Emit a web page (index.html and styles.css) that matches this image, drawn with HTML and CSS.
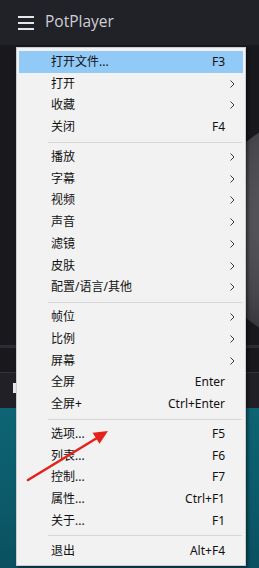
FILE: index.html
```html
<!DOCTYPE html>
<html lang="zh">
<head>
<meta charset="utf-8">
<title>PotPlayer</title>
<link rel="stylesheet" href="styles.css">
</head>
<body>
<div class="app">
  <header class="topbar">
    <svg class="hamburger" width="16" height="14" viewBox="0 0 16 14">
      <rect x="0" y="0" width="16" height="2" fill="#e6e6e8"/>
      <rect x="0" y="6" width="16" height="2" fill="#e6e6e8"/>
      <rect x="0" y="12" width="16" height="2" fill="#e6e6e8"/>
    </svg>
    <span class="title">PotPlayer</span>
  </header>
  <main class="stage">
    <div class="video">
      <div class="disc"></div>
      <div class="seek"></div>
      <div class="controls"><span class="ctl-mark"></span></div>
    </div>
    <div class="desktop"></div>
  </main>

  <div class="menu">
    <div class="item active"><span class="label">打开文件...</span><span class="key">F3</span><span class="sub"></span></div>
    <div class="item"><span class="label">打开</span><span class="key"></span><span class="sub"><svg width="5" height="8" viewBox="0 0 5 8"><polyline points="0.5,0.5 4,4 0.5,7.5" fill="none" stroke="#3a3a3a" stroke-width="1"/></svg></span></div>
    <div class="item"><span class="label">收藏</span><span class="key"></span><span class="sub"><svg width="5" height="8" viewBox="0 0 5 8"><polyline points="0.5,0.5 4,4 0.5,7.5" fill="none" stroke="#3a3a3a" stroke-width="1"/></svg></span></div>
    <div class="item"><span class="label">关闭</span><span class="key">F4</span><span class="sub"></span></div>
    <div class="sep"></div>
    <div class="item"><span class="label">播放</span><span class="key"></span><span class="sub"><svg width="5" height="8" viewBox="0 0 5 8"><polyline points="0.5,0.5 4,4 0.5,7.5" fill="none" stroke="#3a3a3a" stroke-width="1"/></svg></span></div>
    <div class="item"><span class="label">字幕</span><span class="key"></span><span class="sub"><svg width="5" height="8" viewBox="0 0 5 8"><polyline points="0.5,0.5 4,4 0.5,7.5" fill="none" stroke="#3a3a3a" stroke-width="1"/></svg></span></div>
    <div class="item"><span class="label">视频</span><span class="key"></span><span class="sub"><svg width="5" height="8" viewBox="0 0 5 8"><polyline points="0.5,0.5 4,4 0.5,7.5" fill="none" stroke="#3a3a3a" stroke-width="1"/></svg></span></div>
    <div class="item"><span class="label">声音</span><span class="key"></span><span class="sub"><svg width="5" height="8" viewBox="0 0 5 8"><polyline points="0.5,0.5 4,4 0.5,7.5" fill="none" stroke="#3a3a3a" stroke-width="1"/></svg></span></div>
    <div class="item"><span class="label">滤镜</span><span class="key"></span><span class="sub"><svg width="5" height="8" viewBox="0 0 5 8"><polyline points="0.5,0.5 4,4 0.5,7.5" fill="none" stroke="#3a3a3a" stroke-width="1"/></svg></span></div>
    <div class="item"><span class="label">皮肤</span><span class="key"></span><span class="sub"><svg width="5" height="8" viewBox="0 0 5 8"><polyline points="0.5,0.5 4,4 0.5,7.5" fill="none" stroke="#3a3a3a" stroke-width="1"/></svg></span></div>
    <div class="item"><span class="label">配置/语言/其他</span><span class="key"></span><span class="sub"><svg width="5" height="8" viewBox="0 0 5 8"><polyline points="0.5,0.5 4,4 0.5,7.5" fill="none" stroke="#3a3a3a" stroke-width="1"/></svg></span></div>
    <div class="sep"></div>
    <div class="item"><span class="label">帧位</span><span class="key"></span><span class="sub"><svg width="5" height="8" viewBox="0 0 5 8"><polyline points="0.5,0.5 4,4 0.5,7.5" fill="none" stroke="#3a3a3a" stroke-width="1"/></svg></span></div>
    <div class="item"><span class="label">比例</span><span class="key"></span><span class="sub"><svg width="5" height="8" viewBox="0 0 5 8"><polyline points="0.5,0.5 4,4 0.5,7.5" fill="none" stroke="#3a3a3a" stroke-width="1"/></svg></span></div>
    <div class="item"><span class="label">屏幕</span><span class="key"></span><span class="sub"><svg width="5" height="8" viewBox="0 0 5 8"><polyline points="0.5,0.5 4,4 0.5,7.5" fill="none" stroke="#3a3a3a" stroke-width="1"/></svg></span></div>
    <div class="item"><span class="label">全屏</span><span class="key">Enter</span><span class="sub"></span></div>
    <div class="item"><span class="label">全屏+</span><span class="key">Ctrl+Enter</span><span class="sub"></span></div>
    <div class="sep"></div>
    <div class="item"><span class="label">选项...</span><span class="key">F5</span><span class="sub"></span></div>
    <div class="item"><span class="label">列表...</span><span class="key">F6</span><span class="sub"></span></div>
    <div class="item"><span class="label">控制...</span><span class="key">F7</span><span class="sub"></span></div>
    <div class="item"><span class="label">属性...</span><span class="key">Ctrl+F1</span><span class="sub"></span></div>
    <div class="item"><span class="label">关于...</span><span class="key">F1</span><span class="sub"></span></div>
    <div class="sep"></div>
    <div class="item"><span class="label">退出</span><span class="key">Alt+F4</span><span class="sub"></span></div>
  </div>

  <svg class="annot" width="259" height="568" viewBox="0 0 259 568">
    <line x1="28" y1="480" x2="97" y2="438" stroke="#e3231b" stroke-width="2.6" stroke-linecap="round"/>
    <polygon points="108,431 99.5,443.8 92.6,432.8" fill="#e3231b"/>
  </svg>
</div>
</body>
</html>
```

FILE: styles.css
```css
* { box-sizing: border-box; }
html, body { margin: 0; padding: 0; }
body {
  width: 259px;
  height: 568px;
  overflow: hidden;
  background: #17171c;
  font-family: "Noto Sans", "Noto Sans CJK SC", sans-serif;
}
.app {
  position: relative;
  width: 259px;
  height: 568px;
  display: flex;
  flex-direction: column;
}
.topbar {
  height: 45px;
  flex: none;
  background: #212128;
  display: flex;
  align-items: center;
  padding-left: 18px;
  gap: 11px;
}
.hamburger { display: block; margin-top: 0; }
.title {
  color: #cfcfd4;
  font-family: "Open Sans", "Noto Sans", sans-serif;
  font-size: 15.5px;
  letter-spacing: 0;
  line-height: 1;
  margin-top: -1px;
}
.stage {
  flex: 1;
  display: flex;
  flex-direction: column;
}
.video {
  position: relative;
  height: 363px;
  flex: none;
  background: #18181d;
  overflow: hidden;
}
.disc {
  position: absolute;
  left: 205px;
  top: 70px;
  width: 230px;
  height: 230px;
  border-radius: 50%;
  background: radial-gradient(circle at 40% 45%, #5c5c62 0%, #47474d 45%, #2a2a30 75%, #1e1e23 100%);
}
.seek {
  position: absolute;
  left: 0;
  right: 0;
  top: 300px;
  height: 3px;
  background: #2c2c32;
}
.controls {
  position: absolute;
  left: 0;
  right: 0;
  top: 327px;
  height: 36px;
  background: #202026;
  border-top: 1px solid #34343a;
}
.ctl-mark {
  position: absolute;
  left: 13px;
  top: 10px;
  width: 3px;
  height: 10px;
  background: #e8e8e8;
}
.desktop {
  flex: 1;
  background: linear-gradient(180deg, #0e6474 0%, #0b5a6a 60%, #0a5060 100%);
}
.menu {
  position: absolute;
  left: 16px;
  top: 47px;
  width: 230px;
  padding: 3px 2px;
  background: #f2f2f2;
  border: 1px solid #cccccc;
  box-shadow: 2px 2px 3px rgba(0, 0, 0, 0.45);
  color: #111111;
  font-size: 12px;
}
.item {
  height: 21.75px;
  display: grid;
  grid-template-columns: 1fr auto 18px;
  align-items: center;
  padding-left: 32px;
  line-height: 1;
}
.item.active { background: #91c9f7; }
.label { white-space: nowrap; }
.key { white-space: nowrap; text-align: right; }
.sub {
  display: flex;
  align-items: center;
  padding-left: 5px;
}
.sub svg { display: block; }
.sep {
  height: 8px;
  display: flex;
  align-items: center;
  margin-left: 29px;
  margin-right: 1px;
}
.sep::before {
  content: "";
  display: block;
  width: 100%;
  height: 1px;
  background: #d7d7d7;
}
.annot {
  position: absolute;
  left: 0;
  top: 0;
  pointer-events: none;
}
```
